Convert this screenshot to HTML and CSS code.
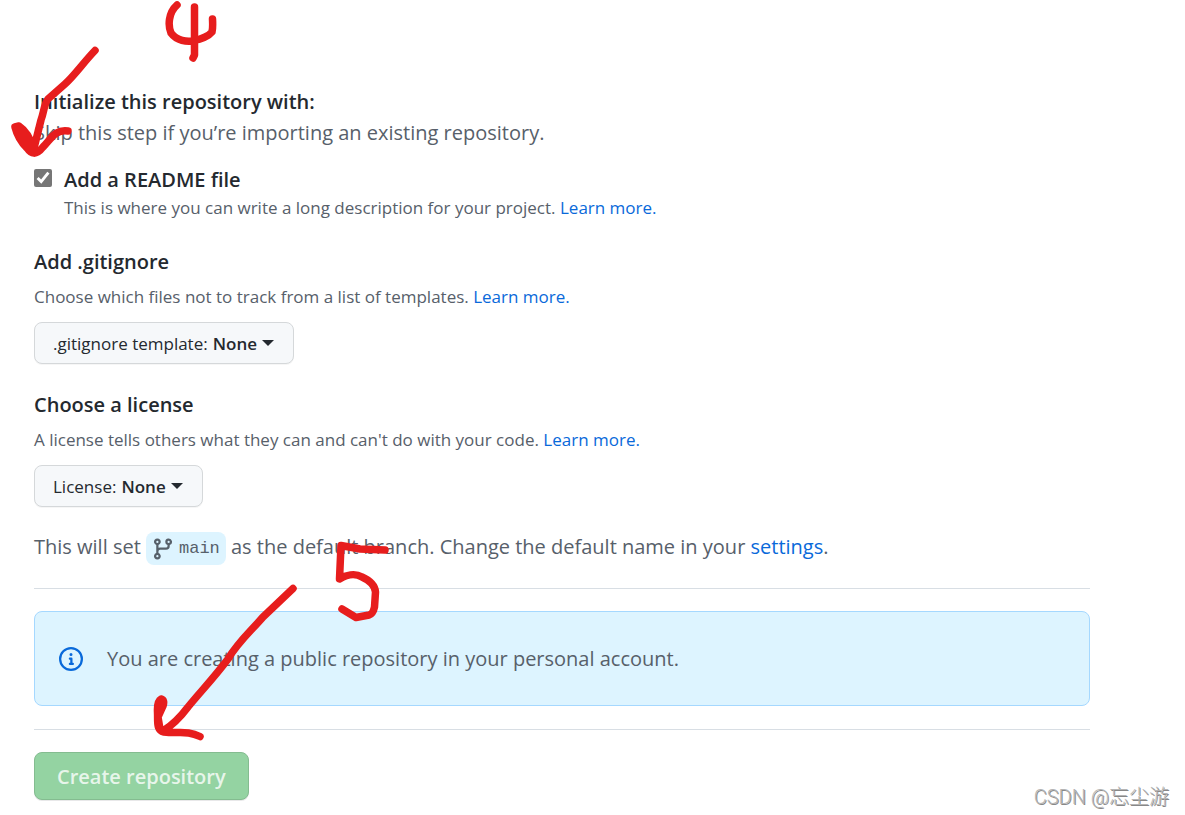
FILE: index.html
```html
<!DOCTYPE html>
<html lang="en">
<head>
  <meta charset="UTF-8" />
  <meta name="viewport" content="width=device-width, initial-scale=1.0"/>
  <title>Create a New Repository</title>
  <link rel="stylesheet" href="styles.css">
</head>
<body>

  <form class="new-repo">
    <!-- Readme -->
    <h2>Initialize this repository with:</h2>
    <p class="text">Skip this step if you’re importing an existing repository.</p>

    <div class="readme">
      <input type="checkbox" id="readme" name="readme" checked />
      <div>
        <label for="readme">Add a README file</label>
        <p class="note">This is where you can write a long description for your project. <a href="#">Learn more.</a></p>
      </div>
    </div>

    <!-- Gitignore -->
    <section class="option">
      <h2>Add .gitignore</h2>
      <p class="note">Choose which files not to track from a list of templates. <a href="#">Learn more.</a></p>
      <div class="picker">
        <label for="gitignore">.gitignore template:</label>
        <select id="gitignore" name="gitignore">
          <option>None</option>
        </select>
        <span class="caret"></span>
      </div>
    </section>

    <!-- License -->
    <section class="option">
      <h2>Choose a license</h2>
      <p class="note">A license tells others what they can and can't do with your code. <a href="#">Learn more.</a></p>
      <div class="picker">
        <label for="license">License:</label>
        <select id="license" name="license">
          <option>None</option>
        </select>
        <span class="caret"></span>
      </div>
    </section>

    <p class="text branch-info">This will set
      <span class="branch"><svg width="24" height="24" viewBox="0 0 16 16" fill="currentColor"><path fill-rule="evenodd" d="M11.75 2.5a.75.75 0 100 1.5.75.75 0 000-1.5zm-2.25.75a2.25 2.25 0 113 2.122V6A2.5 2.5 0 0110 8.5H6a1 1 0 00-1 1v1.128a2.251 2.251 0 11-1.5 0V5.372a2.25 2.25 0 111.5 0v1.836A2.492 2.492 0 016 7h4a1 1 0 001-1v-.628A2.25 2.25 0 019.5 3.25zM4.25 12a.75.75 0 100 1.5.75.75 0 000-1.5zM3.5 3.25a.75.75 0 111.5 0 .75.75 0 01-1.5 0z"/></svg><code>main</code></span>
      as the default branch. Change the default name in your <a href="#">settings</a>.</p>

    <hr>

    <div class="flash">
      <svg width="24" height="24" viewBox="0 0 16 16" fill="currentColor"><path fill-rule="evenodd" d="M8 1.5a6.5 6.5 0 100 13 6.5 6.5 0 000-13zM0 8a8 8 0 1116 0A8 8 0 010 8zm6.5-.25A.75.75 0 017.25 7h1a.75.75 0 01.75.75v2.75h.25a.75.75 0 010 1.5h-2a.75.75 0 010-1.5h.25v-2h-.25a.75.75 0 01-.75-.75zM8 6a1 1 0 100-2 1 1 0 000 2z"/></svg>
      <p class="text">You are creating a public repository in your personal account.</p>
    </div>

    <hr>

    <button type="submit" disabled>Create repository</button>
  </form>

  <!-- Pen marks over the form -->
  <svg class="marks" width="420" height="760" viewBox="0 0 420 760">
    <path d="M177 5C168 13 168 26 171 33C177 41 187 42 193 41C201 39 208 37 212 32Q213 28 212.500 19M194.500 7V55L193 58"/>
    <path d="M95 50.500C83 63 75 75 65 84L48 99C44 104 44 112 41 120L33 152M68 131C55 129 51 139 43 147C36 156 31 154 27 148C22 143 17 135 15 127L19 126C25 130 30 137 33 148M20 130L33 150"/>
    <path d="M385 550L360 549L341 545.500L339.500 579C346 575 355 573 362 577C371 581 375 587 375.500 592L374.500 607Q373 614 369 615L356 617.500L342 609"/>
    <path d="M293 588.500L263 617C250 632 238 642 228 659C213 679 201 691 188 707C179 719 171 726 163 731M200 736.500C187 730 178 734 164 732C156 730 158 722 157.500 712Q157 701 161 699Q165 700 163 706L158 717L160 729"/>
  </svg>

  <div class="watermark">CSDN @忘尘游</div>

</body>
</html>
```
FILE: styles.css
```css
* {
  box-sizing: border-box;
}
body {
  position: relative;
  margin: 0;
  padding: 86px 95px 15px 34px;
  background: white;
  color: #24292f;
  font-family: "Open Sans", "Noto Sans", sans-serif;
  font-size: 20px;
  line-height: 31px;
}
h2, p {
  margin: 0;
}
h2, .readme label {
  font-size: 20px;
  font-weight: 600;
  line-height: 31px;
}
a {
  color: #0969da;
  text-decoration: none;
}
.text {
  color: #57606a;
}
.note {
  color: #57606a;
  font-size: 17px;
  line-height: 26px;
}
.readme {
  display: flex;
  gap: 12px;
  margin-top: 16px;
}
.readme input {
  width: 18px;
  height: 18px;
  margin: 5px 0 0;
  accent-color: #767676;
}
.readme label {
  display: block;
}
.option {
  margin-top: 25px;
}
.option .note {
  margin-top: 7px;
}
.picker {
  display: inline-flex;
  align-items: center;
  height: 42px;
  margin-top: 12px;
  padding: 0 19px 0 18px;
  background: #f6f8fa;
  border: 1px solid #d5d8da;
  border-radius: 8px;
  box-shadow: 0 1px 0 rgba(27,31,36,0.04);
  font-size: 17px;
  vertical-align: top;
}
.picker select {
  appearance: none;
  field-sizing: content;
  margin: 0 5px;
  padding: 0;
  background: none;
  border: none;
  color: #24292f;
  font: inherit;
  font-weight: 600;
}
.caret {
  border: 6px solid transparent;
  border-top-color: #24292f;
  border-bottom: none;
}
.branch-info {
  margin-top: 24px;
}
.branch {
  display: inline-flex;
  align-items: center;
  gap: 4px;
  height: 33px;
  padding: 0 6px 0 5px;
  background: #ddf4ff;
  border-radius: 8px;
  vertical-align: middle;
}
.branch code {
  font-family: "Liberation Mono", monospace;
  font-size: 17px;
}
hr {
  height: 1px;
  margin: 23px 0 22px;
  background: #d8dee4;
  border: none;
}
.flash {
  display: flex;
  align-items: center;
  gap: 24px;
  padding: 31px 24px;
  background: #ddf4ff;
  border: 1px solid #a5d8ff;
  border-radius: 8px;
}
.flash svg {
  color: #0969da;
}
button {
  display: block;
  height: 48px;
  padding: 0 22px;
  background: #94d3a2;
  border: 1px solid #84bc90;
  border-radius: 8px;
  box-shadow: 0 1px 0 rgba(27,31,36,0.1);
  color: rgba(255,255,255,0.8);
  font-family: inherit;
  font-size: 20px;
  font-weight: 600;
}
.marks {
  position: absolute;
  top: 0;
  left: 0;
  fill: none;
  stroke: #e71d1d;
  stroke-width: 7.500;
  stroke-linecap: round;
  stroke-linejoin: round;
  pointer-events: none;
}
.watermark {
  position: absolute;
  right: 16px;
  bottom: 2px;
  color: #b5b5b5;
  font-family: Roboto, "Noto Sans CJK SC", sans-serif;
  font-size: 20px;
  font-weight: 300;
  text-shadow: 1px 1px 0 #888;
}
```
